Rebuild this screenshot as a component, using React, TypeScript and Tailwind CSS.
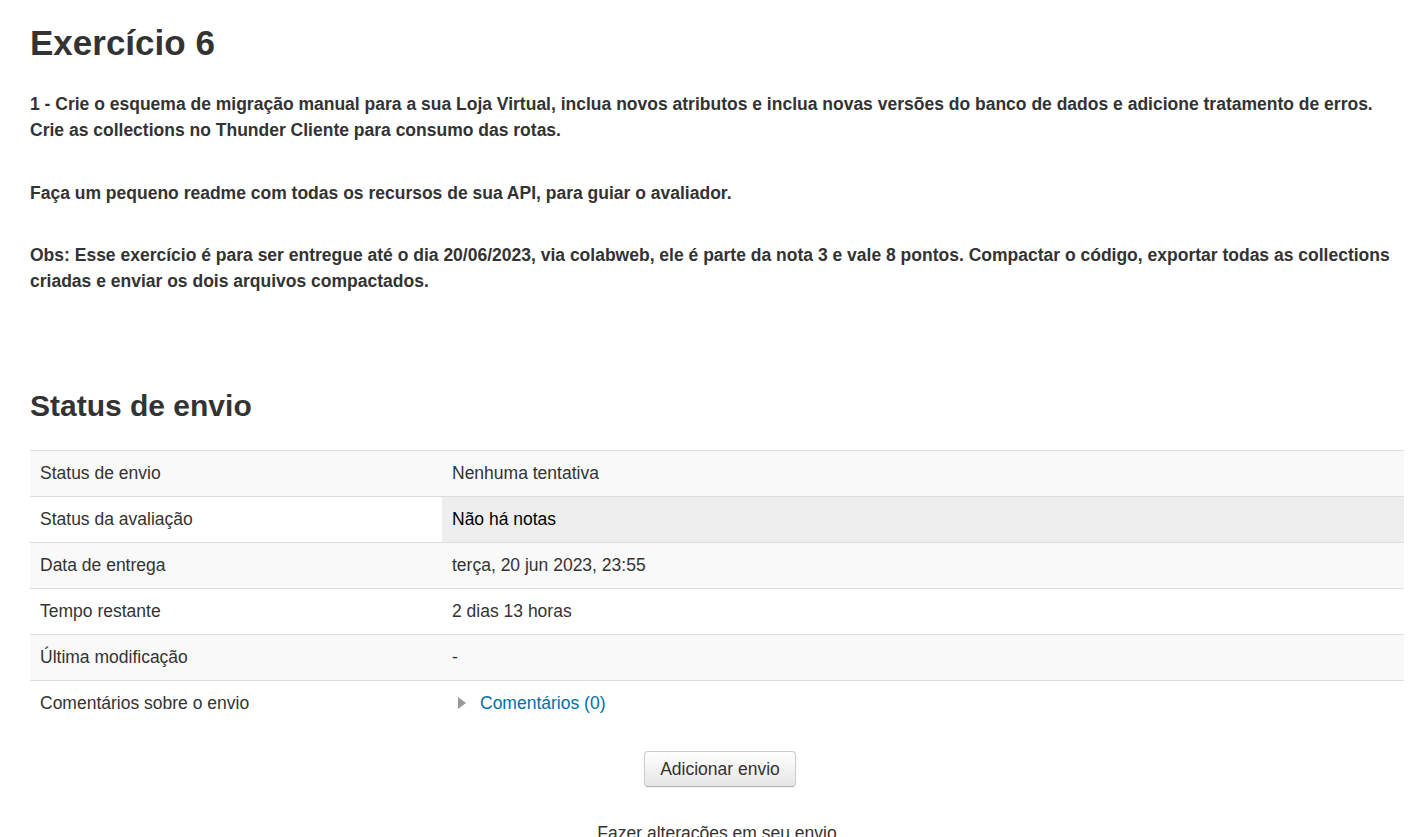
import React from 'react';

interface StatusRow {
  label: string;
  value: React.ReactNode;
  highlight?: boolean;
}

const rows: StatusRow[] = [
  { label: 'Status de envio', value: 'Nenhuma tentativa' },
  { label: 'Status da avaliação', value: 'Não há notas', highlight: true },
  { label: 'Data de entrega', value: 'terça, 20 jun 2023, 23:55' },
  { label: 'Tempo restante', value: '2 dias 13 horas' },
  { label: 'Última modificação', value: '-' },
  {
    label: 'Comentários sobre o envio',
    value: (
      <span className="flex items-center">
        <svg width="10" height="14" viewBox="0 0 10 14" className="ml-[5px] mr-[13px]">
          <path d="M1 1 L9 7 L1 13 Z" fill="#999" />
        </svg>
        <a href="#" className="text-[#0070a8]">Comentários (0)</a>
      </span>
    ),
  },
];

const App: React.FC = () => {
  return (
    <div className="min-h-screen bg-white pl-[30px] pr-[22px] pt-[22px] text-[17.5px] leading-[26px] text-[#333] font-['Liberation_Sans',Arial,sans-serif]">
      <h2 className="text-[35px] leading-[42px] font-bold">Exercício 6</h2>

      <div className="mt-[27px] font-bold">
        <p>
          1 - Crie o esquema de migração manual para a sua Loja Virtual, inclua novos atributos e inclua novas versões do banco de dados e adicione tratamento de erros.
          <br />
          Crie as collections no Thunder Cliente para consumo das rotas.
        </p>
        <p className="mt-[37px]">Faça um pequeno readme com todas os recursos de sua API, para guiar o avaliador.</p>
        <p className="mt-[36px]">
          Obs: Esse exercício é para ser entregue até o dia 20/06/2023, via colabweb, ele é parte da nota 3 e vale 8 pontos. Compactar o código, exportar todas as collections
          <br />
          criadas e enviar os dois arquivos compactados.
        </p>
      </div>

      <h3 className="mt-[94px] text-[30px] leading-[36px] font-bold">Status de envio</h3>

      <div className="mt-[26px]">
        {rows.map((row, i) => (
          <div
            key={row.label}
            className={`grid grid-cols-[412px_1fr] h-[46px] border-t border-[#ddd] ${i % 2 === 0 ? 'bg-[#f9f9f9]' : 'bg-white'}`}
          >
            <div className="px-[10px] pb-[1px] flex items-center">{row.label}</div>
            <div className={`px-[10px] pb-[1px] flex items-center ${row.highlight ? 'bg-[#eee] text-black' : ''}`}>{row.value}</div>
          </div>
        ))}
      </div>

      <div className="mt-[25px] flex justify-center pl-[6px]">
        <button className="h-[36px] px-[15px] rounded-[4px] border border-[#ccc] border-b-[#b3b3b3] bg-gradient-to-b from-white to-[#e6e6e6] text-[17.5px] text-[#333] shadow-[0_1px_2px_rgba(0,0,0,0.05)]">
          Adicionar envio
        </button>
      </div>

      <p className="mt-[33px] text-center">Fazer alterações em seu envio</p>
    </div>
  );
};

export default App;
